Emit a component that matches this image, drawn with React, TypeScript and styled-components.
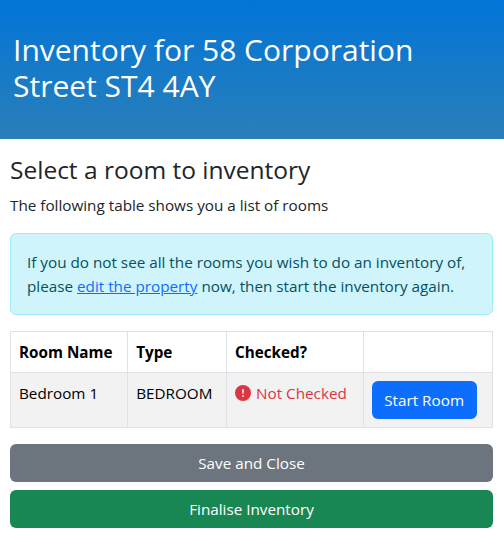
import React from "react"
import styled, { createGlobalStyle } from "styled-components"

const GlobalStyle = createGlobalStyle`
  * {
    box-sizing: border-box;
  }
  body {
    margin: 0;
    background: #fff;
    color: #212529;
    font-family: "Open Sans", "Noto Sans", sans-serif;
    font-size: 15.25px;
    line-height: 24px;
  }
`

const Banner = styled.header`
  height: 139px;
  padding: 32px 13px 0;
  background: linear-gradient(180deg, #0275d8 0%, #2a7fb8 100%);
`

const Title = styled.h1`
  margin: 0;
  color: #fff;
  font-size: 30px;
  font-weight: 400;
  line-height: 36px;
`

const Content = styled.main`
  padding: 15px 11px 0 10px;
`

const Heading = styled.h2`
  margin: 0 0 7px;
  font-size: 24.5px;
  font-weight: 400;
  line-height: 32px;
`

const Lead = styled.p`
  margin: 0 0 16px;
`

const Notice = styled.div`
  margin-bottom: 16px;
  padding: 16px;
  border: 1px solid #9eeaf9;
  border-radius: 6px;
  background: #cff4fc;
  color: #055160;
`

const NoticeLink = styled.a`
  color: #0d6efd;
  text-decoration: underline;
`

const RoomTable = styled.table`
  width: 100%;
  margin-bottom: 16px;
  border-collapse: collapse;
  color: #000;

  th,
  td {
    padding: 8px;
    border: 1px solid #dee2e6;
    text-align: left;
    vertical-align: top;
  }

  tbody tr {
    background: #f2f2f2;
  }
`

const StatusCell = styled.span`
  display: flex;
  align-items: center;
  gap: 5px;
  color: #dc3545;
  white-space: nowrap;
`

const Button = styled.button<{ $tone: string; $block?: boolean }>`
  display: block;
  width: ${(p) => (p.$block ? "100%" : "105px")};
  height: 38px;
  padding: 0 12px;
  border: 0;
  border-radius: 6px;
  background: ${(p) => p.$tone};
  color: #fff;
  font-family: inherit;
  font-size: 15.25px;
  white-space: nowrap;
`

const Actions = styled.div`
  display: flex;
  flex-direction: column;
  gap: 8px;
`

const AlertIcon = () => (
  <svg width="16" height="16" viewBox="0 0 16 16" fill="currentColor">
    <path d="M16 8A8 8 0 1 1 0 8a8 8 0 0 1 16 0zM8 4a.905.905 0 0 0-.9.995l.35 3.507a.552.552 0 0 0 1.1 0l.35-3.507A.905.905 0 0 0 8 4zm.002 6a1 1 0 1 0 0 2 1 1 0 0 0 0-2z" />
  </svg>
)

export default function App() {
  return (
    <>
      <GlobalStyle />
      <Banner>
        <Title>Inventory for 58 Corporation Street ST4 4AY</Title>
      </Banner>
      <Content>
        <Heading>Select a room to inventory</Heading>
        <Lead>The following table shows you a list of rooms</Lead>
        <Notice>
          If you do not see all the rooms you wish to do an inventory of, please{" "}
          <NoticeLink href="#">edit the property</NoticeLink> now, then start the inventory again.
        </Notice>
        <RoomTable>
          <thead>
            <tr>
              <th>Room Name</th>
              <th>Type</th>
              <th>Checked?</th>
              <th></th>
            </tr>
          </thead>
          <tbody>
            <tr>
              <td>Bedroom 1</td>
              <td>BEDROOM</td>
              <td>
                <StatusCell>
                  <AlertIcon />
                  Not Checked
                </StatusCell>
              </td>
              <td>
                <Button $tone="#0d6efd">Start Room</Button>
              </td>
            </tr>
          </tbody>
        </RoomTable>
        <Actions>
          <Button $tone="#6c757d" $block>
            Save and Close
          </Button>
          <Button $tone="#198754" $block>
            Finalise Inventory
          </Button>
        </Actions>
      </Content>
    </>
  )
}
